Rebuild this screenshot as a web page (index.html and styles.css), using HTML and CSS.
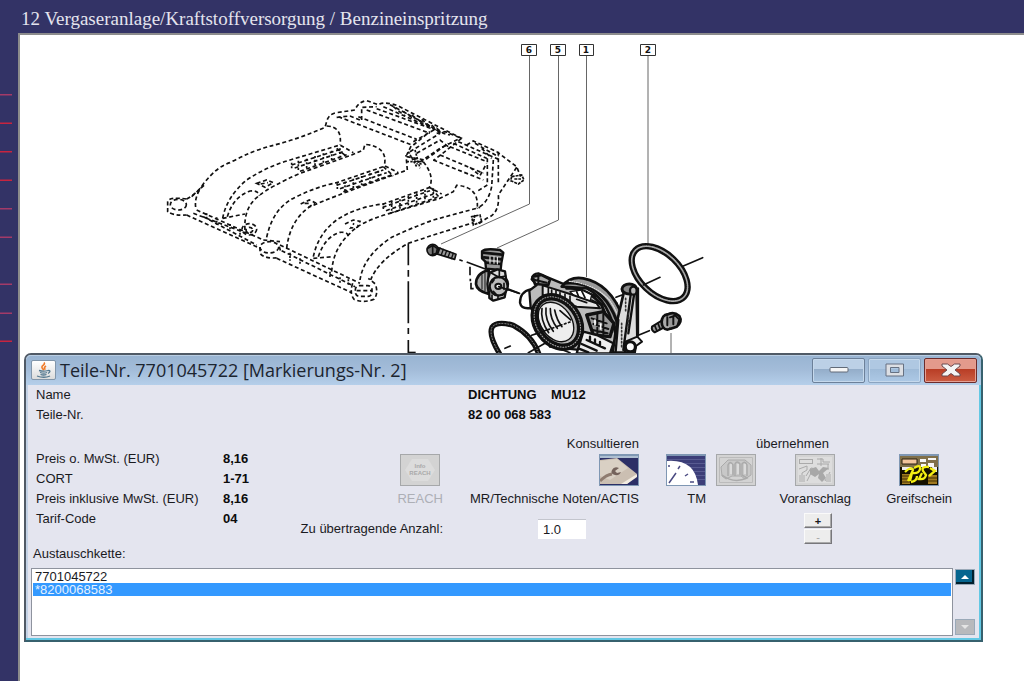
FILE: index.html
```html
<!DOCTYPE html>
<html lang="de">
<head>
<meta charset="utf-8">
<title>12 Vergaseranlage/Kraftstoffversorgung / Benzineinspritzung</title>
<link rel="stylesheet" href="styles.css">
</head>
<body>
<div class="app">
  <aside class="rail">
    <svg class="rail-lines" width="14" height="260" viewBox="0 90 14 260" aria-hidden="true">
      <g fill="#c7243f"><path d="M0 122.500h12v1.500H0zM0 151h12v1.500H0zM0 179.500h12v1.500H0zM0 340.500h12v1.500H0z"/></g>
      <g fill="#a33a68"><path d="M0 94h12v1.500H0zM0 208h12v1.500H0zM0 236.500h12v1.500H0zM0 283.500h12v1.500H0zM0 312.500h12v1.500H0z"/></g>
    </svg>
  </aside>
  <div class="main">
    <header class="crumb"><h1>12 Vergaseranlage/Kraftstoffversorgung / Benzineinspritzung</h1></header>
    <main class="viewer">
      <svg class="drawing" width="720" height="330" viewBox="20 35 720 330" fill="none" stroke="#111" role="img" aria-label="Explosionszeichnung">
        <g stroke="#666">
          <path d="M529.500 56V204L441 244M558.500 56V220L497 248M586.500 56V277M648 56V244"/>
          <path d="M671 333v25"/>
        </g>
        <g fill="#fff" stroke="#333">
          <path d="M521.500 44.500h15v11h-15zM550.500 44.500h15v11h-15zM579.500 44.500h14v11h-14zM640.500 44.500h15v11h-15z"/>
        </g>
        <g class="callout" fill="#111" stroke="none" text-anchor="middle">
          <text x="529" y="53">6</text><text x="558" y="53">5</text><text x="586" y="53">1</text><text x="648" y="53">2</text>
        </g>
        <g transform="scale(.33333)">
          <g stroke-width="5" stroke-dasharray="12 8">
            <path d="M560 597Q592 580 610 552Q650 500 690 488Q760 450 820 436Q900 415 975 382L980 365Q985 342 1010 338L1065 330Q1075 305 1100 302L1135 314Q1155 303 1195 318L1325 385L1383 414L1325 442L1250 492"/>
            <path d="M610 555Q580 590 588 628M575 590L612 556"/>
            <path d="M560 597Q505 590 503 605V635Q520 648 560 645"/>
            <ellipse cx="535" cy="614" rx="24" ry="16"/>
            <path d="M980 378Q1028 380 1020 435"/>
            <path d="M668 655Q680 590 740 540Q800 500 870 480L1020 435L1060 458"/>
            <path d="M682 650Q700 590 750 573Q775 570 778 588M668 655L735 642"/>
            <path d="M735 690Q730 620 780 585Q810 560 900 520L1055 465L1090 450L1095 433Q1165 440 1153 497L1195 518"/>
            <path d="M875 495L1020 448M884 504L1030 455M900 514L1040 464M1010 445L1040 470"/>
            <path d="M875 488v18M895 482v32M920 476v28M945 468v28M970 460v28M995 452v28M1020 445v24" stroke-dasharray="6 5"/>
            <path d="M770 550L800 540L820 548L795 562zM782 552l22 -4"/>
            <path d="M800 712Q820 620 890 590Q950 560 1010 548L1150 500"/>
            <path d="M860 745Q870 660 930 620Q1000 590 1110 550L1200 518L1222 510L1218 465"/>
            <path d="M1010 556L1150 510M1020 566L1160 518M1030 575L1175 525M1150 500L1180 528"/>
            <path d="M1012 550v22M1035 545v28M1060 536v28M1085 528v28M1110 520v28M1135 512v26" stroke-dasharray="6 5"/>
            <path d="M902 612L928 600L945 608L925 622M914 610h20"/>
            <path d="M1270 485Q1305 530 1288 562L1325 582"/>
            <path d="M940 770Q955 700 1010 660Q1070 620 1150 612L1290 562"/>
            <path d="M955 770Q975 710 1020 697Q1045 695 1045 710M940 775L1000 770"/>
            <path d="M995 815Q1000 745 1050 700Q1080 665 1170 640L1320 595L1360 575L1370 556Q1435 560 1432 620"/>
            <path d="M1148 622L1290 572M1158 632L1300 582M1170 640L1312 592M1295 565L1320 595"/>
            <path d="M1150 610v22M1175 604v32M1200 598v32M1225 588v32M1250 580v32M1275 570v30M1300 565v30" stroke-dasharray="6 5"/>
            <path d="M1035 672L1060 660L1080 664L1072 682L1052 684L1062 670"/>
            <path d="M1080 840Q1090 770 1170 715Q1230 685 1300 660L1440 622"/>
            <path d="M1112 840Q1135 780 1225 730L1300 705L1420 668"/>
            <path d="M560 645L780 745M590 630L790 720M580 640L740 700M610 650L770 735"/>
            <path d="M620 640v20M650 652v22M690 672v20M720 688v18M870 758v24M900 775v18M990 815v20M1020 832v20M1045 838v18" stroke-dasharray="6 4"/>
            <path d="M830 775L1055 878M840 735L1080 850M845 752L1065 860"/>
            <ellipse cx="748" cy="688" rx="22" ry="17"/><ellipse cx="748" cy="690" rx="10" ry="8"/>
            <ellipse cx="808" cy="742" rx="28" ry="17"/>
            <path d="M780 742V760Q795 778 838 773M838 740l5 18M790 720L840 725"/>
            <path d="M1058 850Q1048 880 1062 898Q1090 910 1122 898Q1136 880 1126 852L1105 835"/>
            <rect x="1066" y="857" width="50" height="32" rx="12"/><path d="M1070 872h46"/>
            <path d="M1010 352L1050 348L1085 362L1085 322L1130 320M1015 350L1235 435L1220 465M1075 350L1250 418M1100 330L1290 400M1130 326L1300 388M1150 320L1320 395M1170 314L1330 400"/>
            <path d="M1180 320l35 28M1210 334l30 22M1235 345l35 25M1265 358l30 25M1295 375l25 24M1240 425L1310 385L1330 400L1350 405M1230 455L1320 400M1220 470L1275 480L1345 430M1240 435L1290 395M1250 460L1320 420L1345 440"/>
            <path d="M1225 455l25 45M1245 450l15 55M1220 485h50M1232 470l35 25" stroke-dasharray="7 4"/>
          </g>
          <g transform="translate(960 240)" stroke-width="5" stroke-dasharray="12 8">
            <path d="M350 160L375 155L425 175L340 242M440 195L460 183L530 215L590 260L602 290M590 262L535 345Q540 400 500 415L475 432"/>
            <path d="M535 215V310M520 240L515 320Q505 370 470 385M400 190L500 235M390 200L500 245M415 185L540 240M340 240L490 300M360 225L490 280M502 235V315L470 335M485 205l30 30M465 190l70 40M450 262l30 25L500 250"/>
            <path d="M575 290L605 285L612 300L595 312L572 302zM583 297h20M455 410L480 405L485 425L460 435zM465 405l-5 25" stroke-dasharray="9 3"/>
          </g>
          <path d="M1225 730V1060" stroke-width="5" stroke-dasharray="66 14 20 14 126 14 18 18 60"/>
          <path d="M1225 1057h22" stroke-width="4"/>

          <g transform="translate(1230 660)" stroke-linejoin="round" stroke-linecap="round">
            <g stroke="#111" stroke-width="5">
              <path d="M72 78L138 103L134 118L68 98z" fill="#999"/>
              <path d="M90 84l-6 16M100 88l-6 16M110 92l-6 16M120 96l-6 16M130 100l-6 16" stroke-width="4"/>
              <ellipse cx="68" cy="90" rx="17" ry="17" fill="#777"/><path d="M55 84l14 -8l13 10l-3 14l-14 5M68 76v26"/>
              <path d="M148 119l10 4M170 126L228 148M180 140v26M181 176v8M183 188v18h8" stroke-width="5" stroke-linecap="butt"/>
              <path d="M290 206L328 220" stroke-width="6"/>
            </g>
            <path d="M236 150Q198 160 198 192Q200 212 236 222z" fill="#aaa" stroke-width="8"/>
            <path d="M216 165v42M225 160v52" stroke-width="3"/>
            <path d="M216 94Q225 84 270 90L280 98L274 130L272 150L228 146L226 125L216 115z" fill="#999" stroke-width="7"/>
            <path d="M218 98L276 104M222 112L275 118M228 128L270 132" stroke-width="8"/>
            <path d="M240 110v20M252 110v20M262 112v20" stroke="#fff" stroke-width="3"/>
            <path d="M240 158L262 148L285 154L288 175Q300 192 288 210L284 232L250 242L238 234V218Q226 192 240 158z" fill="#ddd" stroke-width="7"/>
            <ellipse cx="266" cy="199" rx="27" ry="28" fill="#bbb" stroke-width="7"/><ellipse cx="265" cy="199" rx="9" ry="8" fill="#fff" stroke-width="6"/>
            <path d="M245 160l22 12l20 -4M268 152v16M246 225v14M264 225v12M246 188l6 -8M282 190v18M250 214l8 8" stroke-width="5"/>
            <path d="M266 200L325 219" stroke-width="5"/>

            <path d="M268 400Q235 345 246 322Q260 302 310 316Q365 345 386 400" stroke-width="16"/>
            <path d="M268 400Q235 345 246 322Q260 302 310 316Q365 345 386 400" stroke="#999" stroke-width="3" stroke-dasharray="3 6"/>
            <path d="M285 385l16 -7M355 398L405 370L480 398" stroke-width="5"/>

            <path d="M362 208Q330 215 330 248Q334 268 362 264" fill="#fff" stroke-width="7"/>
            <path d="M365 178Q368 160 385 160L420 175L480 200L620 250L640 390L600 400L420 380L362 262L358 212L380 195z" fill="#bbb" stroke-width="7"/>
            <path d="M455 200Q480 168 520 175Q600 190 638 290L620 360Q600 240 530 205z" fill="#999" stroke-width="8"/>
            <path d="M465 190Q540 182 590 245Q615 280 625 320M470 205Q530 200 575 255L600 330" stroke-width="9"/>
            <path d="M478 184Q550 190 598 240Q622 275 630 308" stroke="#ddd" stroke-width="4" stroke-dasharray="3 4"/>
            <path d="M480 215L515 210L545 225L540 245L500 235z" fill="#fff" stroke-width="4"/>
            <path d="M500 215l8 20M515 213l10 20M545 240l30 15l10 20" stroke-width="5"/>
            <path d="M398 196L480 222L560 250L570 265L500 260L398 225z" fill="#e5e5e5" stroke-width="6"/>
            <path d="M415 205v20M425 210v20M438 212v20M450 218v16M465 222v18M480 228v20M500 238l30 10" stroke-width="5"/>
            <path d="M368 170L395 165L420 178L415 195L375 192z" fill="#aaa" stroke-width="8"/><path d="M375 180l35 8M385 170v18" stroke-width="6"/>
            <ellipse cx="442" cy="306" rx="62" ry="82" transform="rotate(-36 442 306)" fill="#bbb" stroke-width="22"/>
            <ellipse cx="442" cy="306" rx="62" ry="82" transform="rotate(-36 442 306)" stroke="#aaa" stroke-width="3" stroke-dasharray="3 5"/>
            <ellipse cx="438" cy="306" rx="46" ry="65" transform="rotate(-36 438 306)" fill="#eee" stroke-width="4"/>
            <path d="M384 270Q378 300 402 334M396 266Q390 300 416 338M408 264Q404 300 430 334M421 266Q420 295 442 325M434 270Q440 300 456 320" stroke-width="5"/>
            <path d="M365 346L480 306" stroke-width="5" stroke-dasharray="18 8 5 8"/>
            <path d="M450 272L482 300" stroke-width="5"/>
            <path d="M530 285L580 275L612 310L600 350L550 345z" fill="#999" stroke-width="10"/>
            <path d="M545 295l45 15M550 312l45 15M548 330l45 10M562 282v58M580 282v60" stroke-width="6"/>
            <path d="M555 300v15M572 312v15" stroke="#fff" stroke-width="5"/>
            <path d="M520 335L560 345L610 370L600 400H500z" fill="#eee" stroke-width="7"/>
            <path d="M530 360l55 25M515 372l45 20M505 385l30 12M540 350v12M555 358v12M570 366v12" stroke-width="7"/>
          </g>

          <g transform="translate(1680 660)" stroke-linejoin="round" stroke-linecap="round">
            <path d="M158 398L172 300L192 215L230 212L232 350L222 398z" fill="#ddd" stroke-width="8"/>
            <path d="M212 225L190 390M222 225L205 340M234 205V345M175 300L167 395" stroke-width="7"/>
            <path d="M185 310v70M197 235v40M205 280v45" stroke="#333" stroke-width="5" stroke-dasharray="4 7"/>
            <ellipse cx="208" cy="207" rx="22" ry="15" fill="#888" stroke-width="9"/><ellipse cx="220" cy="212" rx="10" ry="12" fill="#bbb" stroke-width="7"/>
            <path d="M168 232l20 -8M235 346L268 332" stroke-width="5"/>
            <path d="M196 365L232 350L246 365L228 378L225 397H195z" fill="#eee" stroke-width="6"/>
            <circle cx="211" cy="380" r="15" fill="#fff" stroke-width="9"/>
            <path d="M276 320L308 300L320 318L284 337Q273 330 276 320z" fill="#999" stroke-width="6"/>
            <path d="M284 316l7 17M294 310l7 18M304 304l7 18" stroke-width="5"/>
            <ellipse cx="322" cy="306" rx="17" ry="23" fill="#aaa" stroke-width="8"/>
            <path d="M320 285Q340 272 358 288Q368 305 350 320L332 326" fill="#999" stroke-width="8"/>
            <path d="M330 292l16 -5l12 12l-5 16M340 288v25M322 292v24" stroke-width="6"/>
            <ellipse cx="299" cy="161" rx="60" ry="101" transform="rotate(-46 299 161)" stroke-width="19"/>
            <ellipse cx="299" cy="161" rx="60" ry="101" transform="rotate(-46 299 161)" stroke="#aaa" stroke-width="5" stroke-dasharray="3 3"/>
            <path d="M250 195L300 172M370 138L428 113" stroke-width="5"/>
          </g>
        </g>
      </svg>

      <section class="window" role="dialog" aria-labelledby="win-title">
        <div class="titlebar">
          <span class="java">
            <svg width="18" height="17" viewBox="0 0 18 17" fill="none" aria-hidden="true">
              <path d="M9 8Q5 5 8.500 3Q10 2 9 .5M10.500 7.500Q8 6 11 4" stroke="#f07a28" stroke-width="1.600"/>
              <path d="M4 8.500q5 1.300 9 0M5 10.500q4 1.300 7 0M5.500 12.500q3 1 6 0M13 8.500q4 0 0 3M2 14q7 2.500 13 0" stroke="#54788f" stroke-width="1.300"/>
            </svg>
          </span>
          <h2 id="win-title">Teile-Nr. 7701045722 [Markierungs-Nr. 2]</h2>
          <div class="win-buttons">
            <button class="wb" type="button" aria-label="Minimieren"><svg width="20" height="8" viewBox="0 0 20 8"><rect x="1" y="1.500" width="18" height="4.500" rx="1" fill="#f6f6f6" stroke="#626b78"/></svg></button>
            <button class="wb wb-max" type="button" aria-label="Maximieren"><svg width="20" height="14" viewBox="0 0 20 14"><path d="M1 1h17.500v12H1zM5.500 4.500v5H14v-5z" fill="#dcdfe4" fill-rule="evenodd" stroke="#667182"/></svg></button>
            <button class="wb wb-close" type="button" aria-label="Schließen"><svg width="20" height="14" viewBox="0 0 20 14"><path d="M1 1h5.500L10 3.500L13.500 1H19v2l-5 4l5 4v2h-5.500L10 10.500L6.500 13H1v-2l5-4L1 3z" fill="#f4f4f4" stroke="#6b4a50"/></svg></button>
          </div>
        </div>

        <div class="content">
          <dl class="facts part">
            <dt>Name</dt><dd>DICHTUNG &nbsp;&nbsp; MU12</dd>
            <dt>Teile-Nr.</dt><dd>82 00 068 583</dd>
          </dl>

          <div class="middle">
            <dl class="facts price">
              <dt>Preis o. MwSt. (EUR)</dt><dd>8,16</dd>
              <dt>CORT</dt><dd>1-71</dd>
              <dt>Preis inklusive MwSt. (EUR)</dt><dd>8,16</dd>
              <dt>Tarif-Code</dt><dd>04</dd>
            </dl>

            <div class="actions">
              <span class="head consult">Konsultieren</span>
              <span class="head take">übernehmen</span>

              <div class="action reach">
                <button class="tile off" type="button" disabled aria-labelledby="l-reach">
                  <svg width="36" height="28" viewBox="0 0 36 28" aria-hidden="true"><path d="M10 3h16l7 11-7 11H10L3 14z" fill="#dcdcdc"/><g class="tile-text" fill="#a9a9a9" text-anchor="middle"><text x="18" y="12">Info</text><text x="18" y="19">REACH</text></g></svg>
                </button>
                <span id="l-reach" class="dim">REACH</span>
              </div>
              <div class="action notes">
                <button class="tile" type="button" aria-labelledby="l-mr">
                  <svg width="38" height="29" viewBox="0 0 38 29" aria-hidden="true"><path fill="#2c2f66" d="M0 0h38v29H0z"/><path fill="#aebfd2" d="M0 0h38v2H0z"/><path d="M0 4L17 2L37 18L27 28H0z" fill="#cbbfb2"/><path d="M0 5L17 3L28 12L10 24L0 20z" fill="#d9d0c4"/><path d="M37 18v3L27 28h-6z" fill="#f3ece1"/><path d="M0 25Q6 19 12 18" stroke="#8f7c70" stroke-width="3" fill="none"/><path d="M19 12q-5-2-7 2t3 5q4 1 6-3l-4 1-2-2z" fill="#75635c"/></svg>
                </button>
                <span id="l-mr">MR/Technische Noten/ACTIS</span>
              </div>
              <div class="action tm">
                <button class="tile" type="button" aria-labelledby="l-tm">
                  <svg width="38" height="29" viewBox="0 0 38 29" aria-hidden="true"><path fill="#3c3e78" d="M0 0h38v29H0z"/><path stroke="#585b91" d="M0 3.500h38M0 7.500h38M0 11.500h38M0 15.500h38M0 19.500h38M0 23.500h38"/><path d="M0 5Q28 3 31 29H0z" fill="#fff"/><path d="M2 27L9 17M2 11V9M11 13l2-3M18 20l3-2M23 26h4" stroke="#4b4b82" stroke-width="1.500"/></svg>
                </button>
                <span id="l-tm">TM</span>
              </div>
              <div class="action exploded">
                <button class="tile off" type="button" disabled aria-label="Explosionszeichnung">
                  <svg width="36" height="28" viewBox="0 0 36 28" fill="none" stroke="#aaa" aria-hidden="true"><path d="M1.500 1.500h33v25h-33z" stroke="#bbb"/><path d="M3 11L10 4L27 4L33 9V19L27 23L23 20H14L8 23L4 20z" fill="#c8c8c8"/><path d="M10 20V9q2-5 5 0v10M17 20V8q2-4 5 0v11M24 20V8q3-4 5 1v11M4 19q12 9 25 3l-5-3" stroke-width="1.500"/><path d="M13 8v10M20 8v10M27 8v10" stroke="#eee"/></svg>
                </button>
              </div>
              <div class="action estimate">
                <button class="tile off" type="button" disabled aria-labelledby="l-vor">
                  <svg width="36" height="28" viewBox="0 0 36 28" aria-hidden="true"><path fill="#ddd" d="M1 1h34v26H1z"/><g stroke="#aaa" fill="none"><rect x="2.500" y="3.500" width="13" height="4"/><path d="M20 3h6v3h7M20 8h12M24 2v8M31 8v6M2 13l8-3v4l-5 3v8M9 20l5-8 5 1M10 25l4-8M28 25l5-9"/></g><path d="M13 13l6-2 3 4 4-4 6 1-6 5 3 5-4 4-4-4 1-4-4 3-5-3z" fill="#a8a8a8"/><path d="M2 19h6v7H2zM29 18h5v8h-5z" fill="#c5c5c5"/></svg>
                </button>
                <span id="l-vor">Voranschlag</span>
              </div>
              <div class="action pick">
                <button class="tile" type="button" aria-labelledby="l-greif">
                  <svg width="38" height="29" viewBox="0 0 38 29" aria-hidden="true"><path fill="#141000" d="M0 0h38v29H0z"/><path d="M0 0h38v11H0z" fill="#80704a"/><path d="M2 3h15v5H2z" fill="#f1c49b" stroke="#2b2110"/><path d="M20 3h6v3h-6zM28 2h8v2h-8zM28 7h6v4h-6zM21 8h5v3h-5z" fill="#f6f6f6"/><path d="M2 18h8v10H2zM28 19h9v9h-9z" fill="#a07a20"/><path d="M2 20h8M2 23h8M2 26h8M28 22h9M28 25h9" stroke="#423000"/><path d="M2 11h8l4 1-2 2H2zM32 11h5v5h-4z" fill="#eee"/><path d="M5 16q6-6 8-2l-5 11M14 12q7-4 6 1t-8 4l-2 8M29 11q-8-1-6 4l3 4q-1 5-7 4l3-6M30 12l5 3-6 5M11 26q6-1 6-6" stroke="#f4ef12" stroke-width="2.300" fill="none"/></svg>
                </button>
                <span id="l-greif">Greifschein</span>
              </div>

              <label class="qty-label" for="qty">Zu übertragende Anzahl:</label>
              <input class="qty" id="qty" type="text" value="1.0">
              <div class="stepper">
                <button type="button" aria-label="Mehr">+</button>
                <button type="button" disabled aria-label="Weniger">-</button>
              </div>
            </div>
          </div>

          <label class="chain-label" for="chain">Austauschkette:</label>
          <div class="chain">
            <select id="chain" class="chain-list" size="5">
              <option>7701045722</option>
              <option selected>*8200068583</option>
            </select>
            <div class="scroll">
              <button class="sb up" type="button" aria-label="Nach oben"><svg width="8" height="4" viewBox="0 0 8 4"><path d="M0 4l4-4 4 4z" fill="#fff"/></svg></button>
              <button class="sb down" type="button" disabled aria-label="Nach unten"><svg width="8" height="4" viewBox="0 0 8 4"><path d="M0 0l4 4 4-4z" fill="#e4e4e4"/></svg></button>
            </div>
          </div>
        </div>
      </section>
    </main>
  </div>
</div>
</body>
</html>
```
FILE: styles.css
```css
* { box-sizing: border-box; }

body {
  margin: 0;
  background: #333366;
  color: #1a1a1e;
  font: 13px/20px "Liberation Sans", Arial, sans-serif;
}

h1, h2, dl, dd { margin: 0; font-weight: normal; }

button, input, select { margin: 0; padding: 0; font: inherit; color: inherit; border-radius: 0; }

.app { display: flex; min-height: 100vh; }

.rail { flex: none; width: 18px; padding-top: 90px; }
.rail-lines { display: block; }

.main { flex: 1; display: flex; flex-direction: column; min-width: 0; }

.crumb { padding: 7px 3px 2px; }
.crumb h1 {
  color: #e4e4ee;
  font: 19px/24px "Liberation Serif", "Times New Roman", serif;
}

.viewer {
  position: relative;
  flex: 1;
  background: #fff;
  border-top: 2px solid #8c8c8c;
  border-left: 2px solid #8c8c8c;
}

.drawing { display: block; }
.callout { font: bold 9px "DejaVu Sans", sans-serif; }

.window {
  position: absolute;
  top: 318px;
  left: 4px;
  right: 41px;
  display: flex;
  flex-direction: column;
  padding-bottom: 4px;
  background: #e4e5ef;
  border: 2px solid #505a66;
  border-right-color: #37616e;
  border-bottom-color: #37616e;
  border-radius: 7px 7px 0 0;
  box-shadow: inset -2px -2px 0 #63c8e4, inset 2px 0 0 #c3d2e6;
}

.titlebar {
  display: flex;
  align-items: center;
  height: 30px;
  padding: 0 4px 0 5px;
  border-radius: 5px 5px 0 0;
  background: linear-gradient(#98b4d2, #a3bcd9 50%, #b5cfea);
  box-shadow: inset 0 1px 0 #b9cde2;
}
.titlebar h2 {
  flex: 1;
  margin-left: 4px;
  color: #1c2530;
  font: 18px/28px "Open Sans", "Noto Sans", sans-serif;
}

.java {
  display: grid;
  place-items: center;
  width: 25px;
  height: 20px;
  border: 1px solid #8296aa;
  border-radius: 2px;
  background: linear-gradient(#fff, #dcdcdc);
}

.win-buttons { display: flex; gap: 3px; }
.wb {
  display: grid;
  place-items: center;
  width: 53px;
  height: 25px;
  border: 1px solid #6c8099;
  border-radius: 2px;
  background: linear-gradient(#bcd0e6 45%, #94adc9 45%, #a8c4e0);
  box-shadow: inset 0 0 0 1px #c6d9ec;
}
.wb-max { border-color: #8ba4c0; background: linear-gradient(#afc8e2 45%, #9fbbd8 45%, #adc9e6); }
.wb-close {
  border-color: #6d2c2c;
  background: linear-gradient(#e39a8c 45%, #b93e26 45%, #cc5d43);
  box-shadow: inset 0 0 0 1px #e4a195;
}

.content { padding: 0 6px 0 5px; }

.facts { display: grid; grid-auto-rows: 20px; }
.facts dd { font-weight: bold; color: #0c0c0c; }
.part { grid-template-columns: 432px 1fr; padding-left: 5px; }
.price { flex: none; grid-template-columns: 187px 1fr; width: 266px; padding: 12px 0 0 5px; }

.middle { display: flex; align-items: flex-start; margin-top: 12px; }

.actions {
  display: grid;
  grid-template-columns: 146px 196px 67px 50px 95px 101px;
  line-height: 14px;
}
.head { grid-row: 1; justify-self: end; margin-bottom: 3px; }
.consult { grid-column: 2; }
.take { grid-column: 4 / 6; margin-right: 22px; }

.action {
  grid-row: 2;
  justify-self: end;
  display: flex;
  flex-direction: column;
  align-items: center;
  gap: 6px;
  white-space: nowrap;
}
.reach { grid-column: 1; }
.notes { grid-column: 2; align-items: flex-end; }
.tm { grid-column: 3; align-items: flex-end; }
.exploded { grid-column: 4; }
.estimate { grid-column: 5; }
.pick { grid-column: 6; }
.dim { color: #adafb6; }

.tile {
  display: grid;
  place-items: center;
  width: 40px;
  height: 32px;
  border: 1px solid #7f97b3;
  background: #7f97b3;
  overflow: hidden;
}
.tile.off { border-color: #a6a8aa; background: #d3d3d3; }
.tile-text { font: bold 6px "Liberation Sans", Arial, sans-serif; }

.qty-label {
  grid-area: 3 / 1;
  align-self: center;
  justify-self: end;
  margin-top: 7px;
  white-space: nowrap;
}
.qty {
  grid-area: 3 / 2;
  align-self: center;
  justify-self: end;
  width: 48px;
  height: 20px;
  margin: 7px 53px 0 0;
  padding: 0 5px;
  border: 0;
  border-top: 1px solid #c3c5cd;
  background: #fff;
}
.stepper {
  grid-area: 3 / 5;
  justify-self: end;
  display: flex;
  flex-direction: column;
  gap: 1px;
  margin: 7px 19px 0 0;
}
.stepper button {
  width: 28px;
  height: 15px;
  border: 1px solid;
  border-color: #fafafa #77777b #77777b #fafafa;
  background: #ededed;
  box-shadow: inset -1px -1px 0 #aaa;
  font-size: 11px;
  line-height: 12px;
  font-weight: bold;
}
.stepper button:disabled { color: #a5a5a5; font-weight: normal; }

.chain-label { display: block; padding-left: 2px; }
.chain { display: flex; gap: 2px; margin-top: 4px; }
.chain-list {
  flex: 1;
  height: 68px;
  padding: 1px;
  border: 1px solid #8e939e;
  background: #fff;
  overflow: hidden;
  outline: 0;
}
.chain-list option {
  display: flex;
  align-items: center;
  height: 13px;
  min-height: 13px;
  padding: 0 2px;
}
.chain-list option:checked { background: #3399ff linear-gradient(#3399ff, #3399ff); color: #e6f2ff; }

.scroll { display: flex; flex-direction: column; justify-content: space-between; padding: 1px 0; }
.sb {
  display: grid;
  place-items: center;
  width: 20px;
  height: 16px;
  border: 1px solid #9aa9b8;
  background: #b8b9bc;
}
.up { background: #05658f; box-shadow: inset -2px -2px 0 #02202e; }
```
